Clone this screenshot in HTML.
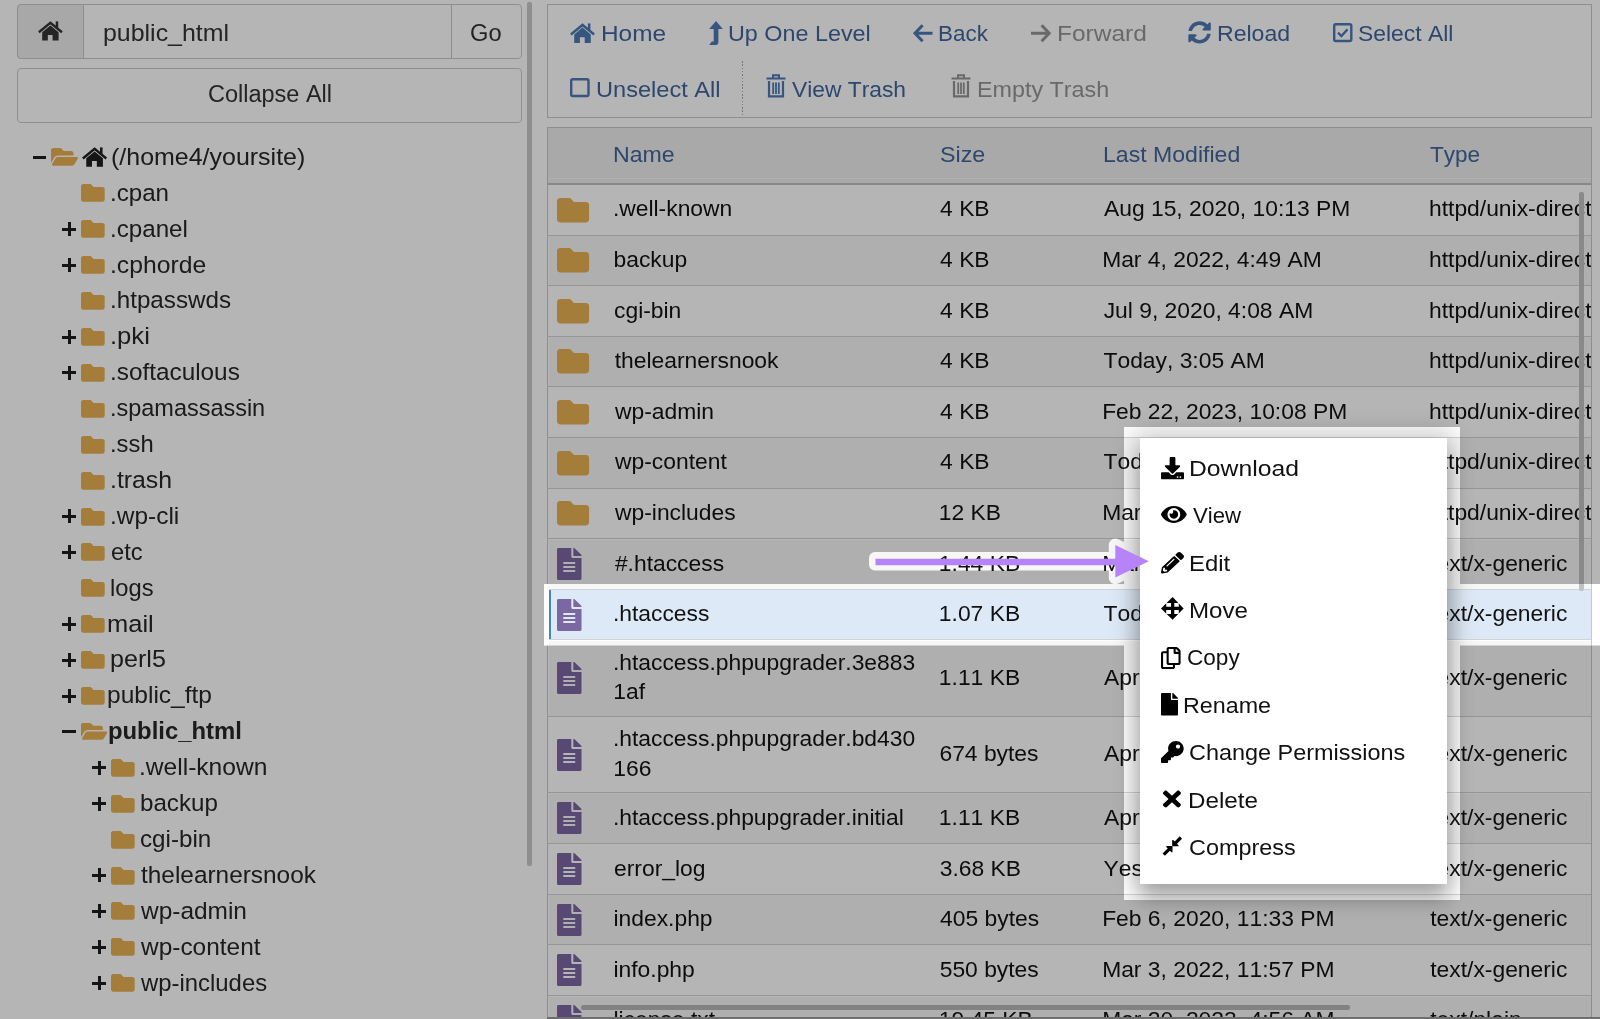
<!DOCTYPE html><html><head><meta charset="utf-8"><style>
html,body{margin:0;padding:0}
body{width:1600px;height:1019px;overflow:hidden;position:relative;background:#fff;font-family:"Liberation Sans",sans-serif}
.t{position:absolute;line-height:1;white-space:nowrap;font-kerning:none}
svg{overflow:visible}
</style></head><body><div id="root" style="position:absolute;left:0;top:0;width:1600px;height:1019px;will-change:transform">
<div style="position:absolute;left:17px;top:4px;width:505px;height:55px;box-sizing:border-box;border:1.5px solid #c9c9c9;border-radius:4px;background:#fff"></div>
<div style="position:absolute;left:17px;top:4px;width:67px;height:55px;box-sizing:border-box;border:1.5px solid #c9c9c9;border-radius:4px 0 0 4px;background:#ededed"></div>
<div style="position:absolute;left:450.5px;top:4px;width:1.5px;height:55px;background:#c9c9c9"></div>
<svg style="position:absolute;left:38px;top:21px;width:24.799999999999997px;height:19.5px;color:#333;" viewBox="0 0 26 20" preserveAspectRatio="none" fill="#333"><path d="M0.9 11.6 L13 1.9 L25.1 11.6" fill="none" stroke="currentColor" stroke-width="2.5" stroke-linejoin="miter"/><rect x="18.6" y="0.4" width="2.6" height="6.6"/><path d="M4.4 11.5 L13 4.6 L21.6 11.5 V20 H15.3 V14.3 H10.3 V20 H4.4 Z"/></svg>
<div class="t" style="top:21.13px;font-size:24.3px;color:#333;left:102.79px;transform:scaleX(1.0257);transform-origin:0 0;">public_html</div>
<div class="t" style="top:21.53px;font-size:23px;color:#333;left:469.81px;transform:scaleX(1.0294);transform-origin:0 0;">Go</div>
<div style="position:absolute;left:17px;top:68px;width:505px;height:55px;box-sizing:border-box;border:1.5px solid #c9c9c9;border-radius:4px;background:#fff"></div>
<div class="t" style="top:82.88px;font-size:23.3px;color:#333;left:207.61px;transform:scaleX(1.0084);transform-origin:0 0;">Collapse All</div>
<div style="position:absolute;left:527.4px;top:2.3px;width:4.399999999999977px;height:863.3000000000001px;background:#c8c8c8;border-radius:2px"></div>
<div style="position:absolute;left:32.8px;top:155.6px;width:13.5px;height:3.0px;background:#1e1e1e"></div>
<svg style="position:absolute;left:51px;top:147.79999999999998px;width:27px;height:17.80000000000001px;color:#e8b052;" viewBox="0 64 576 384" preserveAspectRatio="none" fill="#e8b052"><path d="M572.694 292.093L500.27 416.248A63.997 63.997 0 0 1 444.989 448H45.025c-18.523 0-30.064-20.093-20.731-36.093l72.424-124.155A64 64 0 0 1 152 256h399.964c18.523 0 30.064 20.093 20.73 36.093zM152 224h328v-48c0-26.51-21.49-48-48-48H272l-64-64H48C21.49 64 0 85.49 0 112v278.046l69.077-118.418C86.214 242.25 117.989 224 152 224z"/></svg>
<svg style="position:absolute;left:82px;top:146.9px;width:25.200000000000003px;height:19.69999999999999px;color:#1e1e1e;" viewBox="0 0 26 20" preserveAspectRatio="none" fill="#1e1e1e"><path d="M0.9 11.6 L13 1.9 L25.1 11.6" fill="none" stroke="currentColor" stroke-width="2.5" stroke-linejoin="miter"/><rect x="18.6" y="0.4" width="2.6" height="6.6"/><path d="M4.4 11.5 L13 4.6 L21.6 11.5 V20 H15.3 V14.3 H10.3 V20 H4.4 Z"/></svg>
<div class="t" style="top:144.86px;font-size:24.5px;color:#262626;left:111.25px;transform:scaleX(1.0192);transform-origin:0 0;">(/home4/yoursite)</div>
<svg style="position:absolute;left:81.1px;top:184.4px;width:23.700000000000003px;height:17.69999999999999px;color:#e8b052;" viewBox="0 64 512 384" preserveAspectRatio="none" fill="#e8b052"><path d="M464 128H272l-64-64H48C21.5 64 0 85.5 0 112v288c0 26.5 21.5 48 48 48h416c26.5 0 48-21.5 48-48V176c0-26.5-21.5-48-48-48z"/></svg>
<div class="t" style="top:180.76px;font-size:24.5px;color:#262626;left:109.70px;transform:scaleX(0.9839);transform-origin:0 0;">.cpan</div>
<div style="position:absolute;left:61.8px;top:227.79999999999998px;width:14.400000000000006px;height:3.0px;background:#1e1e1e"></div>
<div style="position:absolute;left:67.5px;top:222.2px;width:3.0px;height:14.0px;background:#1e1e1e"></div>
<svg style="position:absolute;left:81.1px;top:220.29999999999998px;width:23.700000000000003px;height:17.69999999999999px;color:#e8b052;" viewBox="0 64 512 384" preserveAspectRatio="none" fill="#e8b052"><path d="M464 128H272l-64-64H48C21.5 64 0 85.5 0 112v288c0 26.5 21.5 48 48 48h416c26.5 0 48-21.5 48-48V176c0-26.5-21.5-48-48-48z"/></svg>
<div class="t" style="top:216.66px;font-size:24.5px;color:#262626;left:109.69px;transform:scaleX(0.9863);transform-origin:0 0;">.cpanel</div>
<div style="position:absolute;left:61.8px;top:263.69999999999993px;width:14.400000000000006px;height:3.0px;background:#1e1e1e"></div>
<div style="position:absolute;left:67.5px;top:258.09999999999997px;width:3.0px;height:14.0px;background:#1e1e1e"></div>
<svg style="position:absolute;left:81.1px;top:256.19999999999993px;width:23.700000000000003px;height:17.700000000000045px;color:#e8b052;" viewBox="0 64 512 384" preserveAspectRatio="none" fill="#e8b052"><path d="M464 128H272l-64-64H48C21.5 64 0 85.5 0 112v288c0 26.5 21.5 48 48 48h416c26.5 0 48-21.5 48-48V176c0-26.5-21.5-48-48-48z"/></svg>
<div class="t" style="top:252.56px;font-size:24.5px;color:#262626;left:109.64px;transform:scaleX(1.0085);transform-origin:0 0;">.cphorde</div>
<svg style="position:absolute;left:81.1px;top:292.09999999999997px;width:23.700000000000003px;height:17.700000000000045px;color:#e8b052;" viewBox="0 64 512 384" preserveAspectRatio="none" fill="#e8b052"><path d="M464 128H272l-64-64H48C21.5 64 0 85.5 0 112v288c0 26.5 21.5 48 48 48h416c26.5 0 48-21.5 48-48V176c0-26.5-21.5-48-48-48z"/></svg>
<div class="t" style="top:288.46px;font-size:24.5px;color:#262626;left:109.69px;transform:scaleX(0.9871);transform-origin:0 0;">.htpasswds</div>
<div style="position:absolute;left:61.8px;top:335.5px;width:14.400000000000006px;height:3.0px;background:#1e1e1e"></div>
<div style="position:absolute;left:67.5px;top:329.90000000000003px;width:3.0px;height:14.0px;background:#1e1e1e"></div>
<svg style="position:absolute;left:81.1px;top:328.0px;width:23.700000000000003px;height:17.700000000000045px;color:#e8b052;" viewBox="0 64 512 384" preserveAspectRatio="none" fill="#e8b052"><path d="M464 128H272l-64-64H48C21.5 64 0 85.5 0 112v288c0 26.5 21.5 48 48 48h416c26.5 0 48-21.5 48-48V176c0-26.5-21.5-48-48-48z"/></svg>
<div class="t" style="top:324.36px;font-size:24.5px;color:#262626;left:109.56px;transform:scaleX(1.0456);transform-origin:0 0;">.pki</div>
<div style="position:absolute;left:61.8px;top:371.4px;width:14.400000000000006px;height:3.0px;background:#1e1e1e"></div>
<div style="position:absolute;left:67.5px;top:365.8px;width:3.0px;height:14.0px;background:#1e1e1e"></div>
<svg style="position:absolute;left:81.1px;top:363.9px;width:23.700000000000003px;height:17.700000000000045px;color:#e8b052;" viewBox="0 64 512 384" preserveAspectRatio="none" fill="#e8b052"><path d="M464 128H272l-64-64H48C21.5 64 0 85.5 0 112v288c0 26.5 21.5 48 48 48h416c26.5 0 48-21.5 48-48V176c0-26.5-21.5-48-48-48z"/></svg>
<div class="t" style="top:360.26px;font-size:24.5px;color:#262626;left:109.68px;transform:scaleX(0.9928);transform-origin:0 0;">.softaculous</div>
<svg style="position:absolute;left:81.1px;top:399.79999999999995px;width:23.700000000000003px;height:17.700000000000045px;color:#e8b052;" viewBox="0 64 512 384" preserveAspectRatio="none" fill="#e8b052"><path d="M464 128H272l-64-64H48C21.5 64 0 85.5 0 112v288c0 26.5 21.5 48 48 48h416c26.5 0 48-21.5 48-48V176c0-26.5-21.5-48-48-48z"/></svg>
<div class="t" style="top:396.16px;font-size:24.5px;color:#262626;left:109.76px;transform:scaleX(0.9576);transform-origin:0 0;">.spamassassin</div>
<svg style="position:absolute;left:81.1px;top:435.69999999999993px;width:23.700000000000003px;height:17.700000000000045px;color:#e8b052;" viewBox="0 64 512 384" preserveAspectRatio="none" fill="#e8b052"><path d="M464 128H272l-64-64H48C21.5 64 0 85.5 0 112v288c0 26.5 21.5 48 48 48h416c26.5 0 48-21.5 48-48V176c0-26.5-21.5-48-48-48z"/></svg>
<div class="t" style="top:432.06px;font-size:24.5px;color:#262626;left:109.73px;transform:scaleX(0.9707);transform-origin:0 0;">.ssh</div>
<svg style="position:absolute;left:81.1px;top:471.5999999999999px;width:23.700000000000003px;height:17.700000000000045px;color:#e8b052;" viewBox="0 64 512 384" preserveAspectRatio="none" fill="#e8b052"><path d="M464 128H272l-64-64H48C21.5 64 0 85.5 0 112v288c0 26.5 21.5 48 48 48h416c26.5 0 48-21.5 48-48V176c0-26.5-21.5-48-48-48z"/></svg>
<div class="t" style="top:467.96px;font-size:24.5px;color:#262626;left:109.63px;transform:scaleX(1.0131);transform-origin:0 0;">.trash</div>
<div style="position:absolute;left:61.8px;top:515.0px;width:14.400000000000006px;height:3.0px;background:#1e1e1e"></div>
<div style="position:absolute;left:67.5px;top:509.40000000000003px;width:3.0px;height:13.999999999999943px;background:#1e1e1e"></div>
<svg style="position:absolute;left:81.1px;top:507.5px;width:23.700000000000003px;height:17.700000000000045px;color:#e8b052;" viewBox="0 64 512 384" preserveAspectRatio="none" fill="#e8b052"><path d="M464 128H272l-64-64H48C21.5 64 0 85.5 0 112v288c0 26.5 21.5 48 48 48h416c26.5 0 48-21.5 48-48V176c0-26.5-21.5-48-48-48z"/></svg>
<div class="t" style="top:503.86px;font-size:24.5px;color:#262626;left:109.77px;transform:scaleX(0.9980);transform-origin:0 0;">.wp-cli</div>
<div style="position:absolute;left:61.8px;top:550.9px;width:14.400000000000006px;height:3.0px;background:#1e1e1e"></div>
<div style="position:absolute;left:67.5px;top:545.3px;width:3.0px;height:14.0px;background:#1e1e1e"></div>
<svg style="position:absolute;left:81.1px;top:543.4px;width:23.700000000000003px;height:17.700000000000045px;color:#e8b052;" viewBox="0 64 512 384" preserveAspectRatio="none" fill="#e8b052"><path d="M464 128H272l-64-64H48C21.5 64 0 85.5 0 112v288c0 26.5 21.5 48 48 48h416c26.5 0 48-21.5 48-48V176c0-26.5-21.5-48-48-48z"/></svg>
<div class="t" style="top:539.76px;font-size:24.5px;color:#262626;left:110.99px;transform:scaleX(0.9679);transform-origin:0 0;">etc</div>
<svg style="position:absolute;left:81.1px;top:579.3px;width:23.700000000000003px;height:17.700000000000045px;color:#e8b052;" viewBox="0 64 512 384" preserveAspectRatio="none" fill="#e8b052"><path d="M464 128H272l-64-64H48C21.5 64 0 85.5 0 112v288c0 26.5 21.5 48 48 48h416c26.5 0 48-21.5 48-48V176c0-26.5-21.5-48-48-48z"/></svg>
<div class="t" style="top:575.66px;font-size:24.5px;color:#262626;left:110.40px;transform:scaleX(0.9691);transform-origin:0 0;">logs</div>
<div style="position:absolute;left:61.8px;top:622.6999999999999px;width:14.400000000000006px;height:3.0px;background:#1e1e1e"></div>
<div style="position:absolute;left:67.5px;top:617.0999999999999px;width:3.0px;height:14.0px;background:#1e1e1e"></div>
<svg style="position:absolute;left:81.1px;top:615.1999999999999px;width:23.700000000000003px;height:17.700000000000045px;color:#e8b052;" viewBox="0 64 512 384" preserveAspectRatio="none" fill="#e8b052"><path d="M464 128H272l-64-64H48C21.5 64 0 85.5 0 112v288c0 26.5 21.5 48 48 48h416c26.5 0 48-21.5 48-48V176c0-26.5-21.5-48-48-48z"/></svg>
<div class="t" style="top:611.56px;font-size:24.5px;color:#262626;left:107.11px;transform:scaleX(1.0395);transform-origin:0 0;">mail</div>
<div style="position:absolute;left:61.8px;top:658.5999999999999px;width:14.400000000000006px;height:3.0px;background:#1e1e1e"></div>
<div style="position:absolute;left:67.5px;top:652.9999999999999px;width:3.0px;height:14.0px;background:#1e1e1e"></div>
<svg style="position:absolute;left:81.1px;top:651.0999999999999px;width:23.700000000000003px;height:17.700000000000045px;color:#e8b052;" viewBox="0 64 512 384" preserveAspectRatio="none" fill="#e8b052"><path d="M464 128H272l-64-64H48C21.5 64 0 85.5 0 112v288c0 26.5 21.5 48 48 48h416c26.5 0 48-21.5 48-48V176c0-26.5-21.5-48-48-48z"/></svg>
<div class="t" style="top:647.46px;font-size:24.5px;color:#262626;left:110.38px;transform:scaleX(1.0256);transform-origin:0 0;">perl5</div>
<div style="position:absolute;left:61.8px;top:694.5px;width:14.400000000000006px;height:3.0px;background:#1e1e1e"></div>
<div style="position:absolute;left:67.5px;top:688.9px;width:3.0px;height:14.0px;background:#1e1e1e"></div>
<svg style="position:absolute;left:81.1px;top:687.0px;width:23.700000000000003px;height:17.700000000000045px;color:#e8b052;" viewBox="0 64 512 384" preserveAspectRatio="none" fill="#e8b052"><path d="M464 128H272l-64-64H48C21.5 64 0 85.5 0 112v288c0 26.5 21.5 48 48 48h416c26.5 0 48-21.5 48-48V176c0-26.5-21.5-48-48-48z"/></svg>
<div class="t" style="top:683.36px;font-size:24.5px;color:#262626;left:107.22px;transform:scaleX(1.0013);transform-origin:0 0;">public_ftp</div>
<div style="position:absolute;left:62px;top:729.5px;width:13.5px;height:3.0px;background:#1e1e1e"></div>
<svg style="position:absolute;left:80.75px;top:723.2px;width:26.25px;height:16.799999999999955px;color:#e8b052;" viewBox="0 64 576 384" preserveAspectRatio="none" fill="#e8b052"><path d="M572.694 292.093L500.27 416.248A63.997 63.997 0 0 1 444.989 448H45.025c-18.523 0-30.064-20.093-20.731-36.093l72.424-124.155A64 64 0 0 1 152 256h399.964c18.523 0 30.064 20.093 20.73 36.093zM152 224h328v-48c0-26.51-21.49-48-48-48H272l-64-64H48C21.49 64 0 85.49 0 112v278.046l69.077-118.418C86.214 242.25 117.989 224 152 224z"/></svg>
<div class="t" style="top:720.11px;font-size:23.5px;color:#262626;font-weight:bold;left:107.68px;transform:scaleX(1.0144);transform-origin:0 0;">public_html</div>
<div style="position:absolute;left:91.8px;top:766.3px;width:14.400000000000006px;height:3.0px;background:#1e1e1e"></div>
<div style="position:absolute;left:97.5px;top:760.6999999999999px;width:3.0px;height:14.0px;background:#1e1e1e"></div>
<svg style="position:absolute;left:111.1px;top:758.8px;width:23.700000000000017px;height:17.700000000000045px;color:#e8b052;" viewBox="0 64 512 384" preserveAspectRatio="none" fill="#e8b052"><path d="M464 128H272l-64-64H48C21.5 64 0 85.5 0 112v288c0 26.5 21.5 48 48 48h416c26.5 0 48-21.5 48-48V176c0-26.5-21.5-48-48-48z"/></svg>
<div class="t" style="top:755.16px;font-size:24.5px;color:#262626;left:139.26px;transform:scaleX(1.0027);transform-origin:0 0;">.well-known</div>
<div style="position:absolute;left:91.8px;top:802.1999999999999px;width:14.400000000000006px;height:3.0px;background:#1e1e1e"></div>
<div style="position:absolute;left:97.5px;top:796.5999999999999px;width:3.0px;height:14.0px;background:#1e1e1e"></div>
<svg style="position:absolute;left:111.1px;top:794.6999999999999px;width:23.700000000000017px;height:17.700000000000045px;color:#e8b052;" viewBox="0 64 512 384" preserveAspectRatio="none" fill="#e8b052"><path d="M464 128H272l-64-64H48C21.5 64 0 85.5 0 112v288c0 26.5 21.5 48 48 48h416c26.5 0 48-21.5 48-48V176c0-26.5-21.5-48-48-48z"/></svg>
<div class="t" style="top:791.06px;font-size:24.5px;color:#262626;left:139.94px;transform:scaleX(0.9857);transform-origin:0 0;">backup</div>
<svg style="position:absolute;left:111.1px;top:830.6px;width:23.700000000000017px;height:17.700000000000045px;color:#e8b052;" viewBox="0 64 512 384" preserveAspectRatio="none" fill="#e8b052"><path d="M464 128H272l-64-64H48C21.5 64 0 85.5 0 112v288c0 26.5 21.5 48 48 48h416c26.5 0 48-21.5 48-48V176c0-26.5-21.5-48-48-48z"/></svg>
<div class="t" style="top:826.96px;font-size:24.5px;color:#262626;left:140.27px;transform:scaleX(0.9865);transform-origin:0 0;">cgi-bin</div>
<div style="position:absolute;left:91.8px;top:874.0px;width:14.400000000000006px;height:3.0px;background:#1e1e1e"></div>
<div style="position:absolute;left:97.5px;top:868.4px;width:3.0px;height:14.0px;background:#1e1e1e"></div>
<svg style="position:absolute;left:111.1px;top:866.5px;width:23.700000000000017px;height:17.700000000000045px;color:#e8b052;" viewBox="0 64 512 384" preserveAspectRatio="none" fill="#e8b052"><path d="M464 128H272l-64-64H48C21.5 64 0 85.5 0 112v288c0 26.5 21.5 48 48 48h416c26.5 0 48-21.5 48-48V176c0-26.5-21.5-48-48-48z"/></svg>
<div class="t" style="top:862.86px;font-size:24.5px;color:#262626;left:140.93px;transform:scaleX(0.9956);transform-origin:0 0;">thelearnersnook</div>
<div style="position:absolute;left:91.8px;top:909.9px;width:14.400000000000006px;height:3.0px;background:#1e1e1e"></div>
<div style="position:absolute;left:97.5px;top:904.3px;width:3.0px;height:14.0px;background:#1e1e1e"></div>
<svg style="position:absolute;left:111.1px;top:902.4px;width:23.700000000000017px;height:17.700000000000045px;color:#e8b052;" viewBox="0 64 512 384" preserveAspectRatio="none" fill="#e8b052"><path d="M464 128H272l-64-64H48C21.5 64 0 85.5 0 112v288c0 26.5 21.5 48 48 48h416c26.5 0 48-21.5 48-48V176c0-26.5-21.5-48-48-48z"/></svg>
<div class="t" style="top:898.76px;font-size:24.5px;color:#262626;left:141.34px;transform:scaleX(0.9976);transform-origin:0 0;">wp-admin</div>
<div style="position:absolute;left:91.8px;top:945.8px;width:14.400000000000006px;height:3.0px;background:#1e1e1e"></div>
<div style="position:absolute;left:97.5px;top:940.1999999999999px;width:3.0px;height:14.0px;background:#1e1e1e"></div>
<svg style="position:absolute;left:111.1px;top:938.3px;width:23.700000000000017px;height:17.700000000000045px;color:#e8b052;" viewBox="0 64 512 384" preserveAspectRatio="none" fill="#e8b052"><path d="M464 128H272l-64-64H48C21.5 64 0 85.5 0 112v288c0 26.5 21.5 48 48 48h416c26.5 0 48-21.5 48-48V176c0-26.5-21.5-48-48-48z"/></svg>
<div class="t" style="top:934.66px;font-size:24.5px;color:#262626;left:141.34px;transform:scaleX(0.9975);transform-origin:0 0;">wp-content</div>
<div style="position:absolute;left:91.8px;top:981.6999999999999px;width:14.400000000000006px;height:3.0px;background:#1e1e1e"></div>
<div style="position:absolute;left:97.5px;top:976.0999999999999px;width:3.0px;height:14.0px;background:#1e1e1e"></div>
<svg style="position:absolute;left:111.1px;top:974.1999999999999px;width:23.700000000000017px;height:17.700000000000045px;color:#e8b052;" viewBox="0 64 512 384" preserveAspectRatio="none" fill="#e8b052"><path d="M464 128H272l-64-64H48C21.5 64 0 85.5 0 112v288c0 26.5 21.5 48 48 48h416c26.5 0 48-21.5 48-48V176c0-26.5-21.5-48-48-48z"/></svg>
<div class="t" style="top:970.56px;font-size:24.5px;color:#262626;left:141.33px;transform:scaleX(0.9750);transform-origin:0 0;">wp-includes</div>
<div style="position:absolute;left:547px;top:4px;width:1045px;height:114px;box-sizing:border-box;border:1.5px solid #c9c9c9;background:#fff"></div>
<svg style="position:absolute;left:570px;top:22.7px;width:25px;height:20.000000000000004px;color:#4c79b4;" viewBox="0 0 26 20" preserveAspectRatio="none" fill="#4c79b4"><path d="M0.9 11.6 L13 1.9 L25.1 11.6" fill="none" stroke="currentColor" stroke-width="2.5" stroke-linejoin="miter"/><rect x="18.6" y="0.4" width="2.6" height="6.6"/><path d="M4.4 11.5 L13 4.6 L21.6 11.5 V20 H15.3 V14.3 H10.3 V20 H4.4 Z"/></svg>
<div class="t" style="top:22.77px;font-size:22.6px;color:#41659b;left:601.00px;transform:scaleX(1.0796);transform-origin:0 0;">Home</div>
<svg style="position:absolute;left:708.6px;top:20.5px;width:14px;height:24.5px" viewBox="0 0 14 24.5" fill="#4c79b4"><path d="M7 0 L13.8 8 H9.4 V21 Q9.4 24 6.6 24 H0.2 L2.8 20.6 H4.7 V8 H0.2 Z"/></svg>
<div class="t" style="top:22.77px;font-size:22.6px;color:#41659b;left:728.40px;transform:scaleX(1.0331);transform-origin:0 0;">Up One Level</div>
<svg style="position:absolute;left:912.8px;top:23.5px;width:19.5px;height:18.5px" viewBox="0 0 19.5 18.5"><path d="M9.6 1.3 L2 9.25 L9.6 17.2 M2.4 9.25 H19.5" fill="none" stroke="#4c79b4" stroke-width="3"/></svg>
<div class="t" style="top:22.77px;font-size:22.6px;color:#41659b;left:938.16px;transform:scaleX(0.9933);transform-origin:0 0;">Back</div>
<svg style="position:absolute;left:1031.2px;top:23.5px;width:20.2px;height:18.5px" viewBox="0 0 20.2 18.5"><path d="M10.6 1.3 L18.2 9.25 L10.6 17.2 M0 9.25 H17.8" fill="none" stroke="#959595" stroke-width="3"/></svg>
<div class="t" style="top:22.77px;font-size:22.6px;color:#959595;left:1056.79px;transform:scaleX(1.0833);transform-origin:0 0;">Forward</div>
<svg style="position:absolute;left:1187.8px;top:21.3px;width:23.200000000000045px;height:22.8px;color:#4c79b4;" viewBox="0 0 512 512" preserveAspectRatio="none" fill="#4c79b4"><path d="M370.72 133.28C339.458 104.008 298.888 87.962 255.848 88c-77.458.068-144.328 53.178-162.791 126.85-1.344 5.363-6.122 9.15-11.651 9.15H24.103c-7.498 0-13.194-6.807-11.807-14.176C33.933 94.924 134.813 8 256 8c66.448 0 126.791 26.136 171.315 68.685L463.03 40.97C478.149 25.851 504 36.559 504 57.941V192c0 13.255-10.745 24-24 24H345.941c-21.382 0-32.090-25.851-16.971-40.971l41.75-41.749zM32 296h134.059c21.382 0 32.090 25.851 16.971 40.971l-41.75 41.75c31.262 29.273 71.835 45.319 114.876 45.280 77.418-.07 144.315-53.144 162.787-126.849 1.344-5.363 6.122-9.15 11.651-9.15h57.304c7.498 0 13.194 6.807 11.807 14.176C478.067 417.076 377.187 504 256 504c-66.448 0-126.791-26.136-171.315-68.685L48.97 471.030C33.851 486.149 8 475.441 8 454.059V320c0-13.255 10.745-24 24-24z"/></svg>
<div class="t" style="top:22.77px;font-size:22.6px;color:#41659b;left:1216.86px;transform:scaleX(1.0211);transform-origin:0 0;">Reload</div>
<svg style="position:absolute;left:1332.8px;top:23.1px;width:19.5px;height:19.2px" viewBox="0 0 19.5 19.2"><rect x="1.2" y="1.2" width="17.1" height="16.8" rx="1.5" fill="none" stroke="#4c79b4" stroke-width="2.4"/><path d="M5 9.6 L8.4 13 L14.5 6.4" fill="none" stroke="#4c79b4" stroke-width="2.3"/></svg>
<div class="t" style="top:22.77px;font-size:22.6px;color:#41659b;left:1358.36px;transform:scaleX(1.0123);transform-origin:0 0;">Select All</div>
<svg style="position:absolute;left:570px;top:78.4px;width:19.7px;height:19.2px" viewBox="0 0 19.7 19.2"><rect x="1.2" y="1.2" width="17.3" height="16.8" rx="1.5" fill="none" stroke="#4c79b4" stroke-width="2.4"/></svg>
<div class="t" style="top:78.67px;font-size:22.6px;color:#41659b;left:595.58px;transform:scaleX(1.0442);transform-origin:0 0;">Unselect All</div>
<div style="position:absolute;left:741.5px;top:61px;width:1.5px;height:56px;background:repeating-linear-gradient(to bottom,#a9a9a9 0 1.5px,transparent 1.5px 3.3px)"></div>
<svg style="position:absolute;left:766.2px;top:73.7px;width:20px;height:24px" viewBox="0 0 20 24"><path d="M0.5 4.6 H19.5 M7 4.6 V1.2 H13 V4.6" fill="none" stroke="#4c79b4" stroke-width="2"/><path d="M3 7 V22.3 H17 V7" fill="none" stroke="#4c79b4" stroke-width="2.2"/><path d="M7.2 8.5 V20 M10 8.5 V20 M12.8 8.5 V20" stroke="#4c79b4" stroke-width="1.8"/></svg>
<div class="t" style="top:78.67px;font-size:22.6px;color:#41659b;left:792.40px;transform:scaleX(1.0093);transform-origin:0 0;">View Trash</div>
<svg style="position:absolute;left:951.2px;top:73.7px;width:20px;height:24px" viewBox="0 0 20 24"><path d="M0.5 4.6 H19.5 M7 4.6 V1.2 H13 V4.6" fill="none" stroke="#959595" stroke-width="2"/><path d="M3 7 V22.3 H17 V7" fill="none" stroke="#959595" stroke-width="2.2"/><path d="M7.2 8.5 V20 M10 8.5 V20 M12.8 8.5 V20" stroke="#959595" stroke-width="1.8"/></svg>
<div class="t" style="top:78.67px;font-size:22.6px;color:#959595;left:976.84px;transform:scaleX(1.0319);transform-origin:0 0;">Empty Trash</div>
<div style="position:absolute;left:547px;top:127px;width:1045px;height:913px;box-sizing:border-box;border:1.5px solid #c9c9c9;background:#fff"></div>
<div style="position:absolute;left:547px;top:127px;width:1045px;height:57.400000000000006px;box-sizing:border-box;border:1.5px solid #c9c9c9;border-bottom:none;background:#eeeeee"></div>
<div style="position:absolute;left:548.5px;top:178px;width:1042.0px;height:1px;background:#f8f8f8"></div>
<div style="position:absolute;left:547px;top:183.4px;width:1045px;height:1.799999999999983px;background:#c0c0c0"></div>
<div class="t" style="top:144.05px;font-size:22.5px;color:#41659b;left:613.10px;transform:scaleX(1.0276);transform-origin:0 0;">Name</div>
<div class="t" style="top:144.05px;font-size:22.5px;color:#41659b;left:940.19px;transform:scaleX(1.0336);transform-origin:0 0;">Size</div>
<div class="t" style="top:144.05px;font-size:22.5px;color:#41659b;left:1102.71px;transform:scaleX(1.0258);transform-origin:0 0;">Last Modified</div>
<div class="t" style="top:144.05px;font-size:22.5px;color:#41659b;left:1430.09px;">Type</div>
<div style="position:absolute;left:547px;top:0;width:1044px;height:1017px;overflow:hidden">
<div style="position:absolute;left:1.5px;top:185.4px;width:1042.0px;height:49.599999999999994px;background:#fff"></div>
<div style="position:absolute;left:0px;top:234.5px;width:1045px;height:1.0999999999999943px;background:#d3d3d3"></div>
<svg style="position:absolute;left:9.899999999999977px;top:197.5px;width:32.10000000000002px;height:24.399999999999977px;color:#e8b052;" viewBox="0 64 512 384" preserveAspectRatio="none" fill="#e8b052"><path d="M464 128H272l-64-64H48C21.5 64 0 85.5 0 112v288c0 26.5 21.5 48 48 48h416c26.5 0 48-21.5 48-48V176c0-26.5-21.5-48-48-48z"/></svg>
<div class="t" style="left:65.91px;top:197.36px;font-size:22.85px;color:#111">.well-known</div>
<div class="t" style="left:393.08px;top:197.36px;font-size:22.85px;color:#111">4 KB</div>
<div class="t" style="left:556.96px;top:197.36px;font-size:22.85px;color:#111">Aug 15, 2020, 10:13 PM</div>
<div class="t" style="left:882.02px;top:197.36px;font-size:22.85px;color:#111">httpd/unix-directory</div>
<div style="position:absolute;left:1.5px;top:236.0px;width:1042.0px;height:49.60000000000002px;background:#f7f7f7"></div>
<div style="position:absolute;left:0px;top:285.1px;width:1045px;height:1.1000000000000227px;background:#d3d3d3"></div>
<svg style="position:absolute;left:9.899999999999977px;top:248.10000000000002px;width:32.10000000000002px;height:24.399999999999977px;color:#e8b052;" viewBox="0 64 512 384" preserveAspectRatio="none" fill="#e8b052"><path d="M464 128H272l-64-64H48C21.5 64 0 85.5 0 112v288c0 26.5 21.5 48 48 48h416c26.5 0 48-21.5 48-48V176c0-26.5-21.5-48-48-48z"/></svg>
<div class="t" style="left:66.53px;top:247.96px;font-size:22.85px;color:#111">backup</div>
<div class="t" style="left:393.08px;top:247.96px;font-size:22.85px;color:#111">4 KB</div>
<div class="t" style="left:555.13px;top:247.96px;font-size:22.85px;color:#111">Mar 4, 2022, 4:49 AM</div>
<div class="t" style="left:882.02px;top:247.96px;font-size:22.85px;color:#111">httpd/unix-directory</div>
<div style="position:absolute;left:1.5px;top:286.6px;width:1042.0px;height:49.60000000000002px;background:#fff"></div>
<div style="position:absolute;left:0px;top:335.70000000000005px;width:1045px;height:1.1000000000000227px;background:#d3d3d3"></div>
<svg style="position:absolute;left:9.899999999999977px;top:298.70000000000005px;width:32.10000000000002px;height:24.399999999999977px;color:#e8b052;" viewBox="0 64 512 384" preserveAspectRatio="none" fill="#e8b052"><path d="M464 128H272l-64-64H48C21.5 64 0 85.5 0 112v288c0 26.5 21.5 48 48 48h416c26.5 0 48-21.5 48-48V176c0-26.5-21.5-48-48-48z"/></svg>
<div class="t" style="left:67.03px;top:298.56px;font-size:22.85px;color:#111">cgi-bin</div>
<div class="t" style="left:393.08px;top:298.56px;font-size:22.85px;color:#111">4 KB</div>
<div class="t" style="left:556.64px;top:298.56px;font-size:22.85px;color:#111">Jul 9, 2020, 4:08 AM</div>
<div class="t" style="left:882.02px;top:298.56px;font-size:22.85px;color:#111">httpd/unix-directory</div>
<div style="position:absolute;left:1.5px;top:337.20000000000005px;width:1042.0px;height:49.60000000000002px;background:#f7f7f7"></div>
<div style="position:absolute;left:0px;top:386.30000000000007px;width:1045px;height:1.1000000000000227px;background:#d3d3d3"></div>
<svg style="position:absolute;left:9.899999999999977px;top:349.30000000000007px;width:32.10000000000002px;height:24.399999999999977px;color:#e8b052;" viewBox="0 64 512 384" preserveAspectRatio="none" fill="#e8b052"><path d="M464 128H272l-64-64H48C21.5 64 0 85.5 0 112v288c0 26.5 21.5 48 48 48h416c26.5 0 48-21.5 48-48V176c0-26.5-21.5-48-48-48z"/></svg>
<div class="t" style="left:67.65px;top:349.16px;font-size:22.85px;color:#111">thelearnersnook</div>
<div class="t" style="left:393.08px;top:349.16px;font-size:22.85px;color:#111">4 KB</div>
<div class="t" style="left:556.49px;top:349.16px;font-size:22.85px;color:#111">Today, 3:05 AM</div>
<div class="t" style="left:882.02px;top:349.16px;font-size:22.85px;color:#111">httpd/unix-directory</div>
<div style="position:absolute;left:1.5px;top:387.80000000000007px;width:1042.0px;height:49.60000000000002px;background:#fff"></div>
<div style="position:absolute;left:0px;top:436.9000000000001px;width:1045px;height:1.1000000000000227px;background:#d3d3d3"></div>
<svg style="position:absolute;left:9.899999999999977px;top:399.9000000000001px;width:32.10000000000002px;height:24.399999999999977px;color:#e8b052;" viewBox="0 64 512 384" preserveAspectRatio="none" fill="#e8b052"><path d="M464 128H272l-64-64H48C21.5 64 0 85.5 0 112v288c0 26.5 21.5 48 48 48h416c26.5 0 48-21.5 48-48V176c0-26.5-21.5-48-48-48z"/></svg>
<div class="t" style="left:68.03px;top:399.76px;font-size:22.85px;color:#111">wp-admin</div>
<div class="t" style="left:393.08px;top:399.76px;font-size:22.85px;color:#111">4 KB</div>
<div class="t" style="left:555.13px;top:399.76px;font-size:22.85px;color:#111">Feb 22, 2023, 10:08 PM</div>
<div class="t" style="left:882.02px;top:399.76px;font-size:22.85px;color:#111">httpd/unix-directory</div>
<div style="position:absolute;left:1.5px;top:438.4000000000001px;width:1042.0px;height:49.60000000000002px;background:#f7f7f7"></div>
<div style="position:absolute;left:0px;top:487.5000000000001px;width:1045px;height:1.1000000000000227px;background:#d3d3d3"></div>
<svg style="position:absolute;left:9.899999999999977px;top:450.5000000000001px;width:32.10000000000002px;height:24.399999999999977px;color:#e8b052;" viewBox="0 64 512 384" preserveAspectRatio="none" fill="#e8b052"><path d="M464 128H272l-64-64H48C21.5 64 0 85.5 0 112v288c0 26.5 21.5 48 48 48h416c26.5 0 48-21.5 48-48V176c0-26.5-21.5-48-48-48z"/></svg>
<div class="t" style="left:68.03px;top:450.36px;font-size:22.85px;color:#111">wp-content</div>
<div class="t" style="left:393.08px;top:450.36px;font-size:22.85px;color:#111">4 KB</div>
<div class="t" style="left:556.49px;top:450.36px;font-size:22.85px;color:#111">Today, 2:58 AM</div>
<div class="t" style="left:882.02px;top:450.36px;font-size:22.85px;color:#111">httpd/unix-directory</div>
<div style="position:absolute;left:1.5px;top:489.0000000000001px;width:1042.0px;height:49.60000000000002px;background:#fff"></div>
<div style="position:absolute;left:0px;top:538.1000000000001px;width:1045px;height:1.1000000000000227px;background:#d3d3d3"></div>
<svg style="position:absolute;left:9.899999999999977px;top:501.1000000000002px;width:32.10000000000002px;height:24.400000000000034px;color:#e8b052;" viewBox="0 64 512 384" preserveAspectRatio="none" fill="#e8b052"><path d="M464 128H272l-64-64H48C21.5 64 0 85.5 0 112v288c0 26.5 21.5 48 48 48h416c26.5 0 48-21.5 48-48V176c0-26.5-21.5-48-48-48z"/></svg>
<div class="t" style="left:68.03px;top:500.96px;font-size:22.85px;color:#111">wp-includes</div>
<div class="t" style="left:391.86px;top:500.96px;font-size:22.85px;color:#111">12 KB</div>
<div class="t" style="left:555.13px;top:500.96px;font-size:22.85px;color:#111">Mar 29, 2023, 4:17 AM</div>
<div class="t" style="left:882.02px;top:500.96px;font-size:22.85px;color:#111">httpd/unix-directory</div>
<div style="position:absolute;left:1.5px;top:539.6000000000001px;width:1042.0px;height:49.60000000000002px;background:#f7f7f7"></div>
<div style="position:absolute;left:0px;top:588.7000000000002px;width:1045px;height:1.1000000000000227px;background:#d3d3d3"></div>
<svg style="position:absolute;left:9.5px;top:547.9000000000001px;width:24.5px;height:32.0px;color:#7b68a2;" viewBox="0 0 384 512" preserveAspectRatio="none" fill="#7b68a2"><path d="M224 136V0H24C10.7 0 0 10.7 0 24v464c0 13.3 10.7 24 24 24h336c13.3 0 24-10.7 24-24V160H248c-13.2 0-24-10.8-24-24zm64 236c0 6.6-5.4 12-12 12H108c-6.6 0-12-5.4-12-12v-8c0-6.6 5.4-12 12-12h168c6.6 0 12 5.4 12 12v8zm0-64c0 6.6-5.4 12-12 12H108c-6.6 0-12-5.4-12-12v-8c0-6.6 5.4-12 12-12h168c6.6 0 12 5.4 12 12v8zm0-72v8c0 6.6-5.4 12-12 12H108c-6.6 0-12-5.4-12-12v-8c0-6.6 5.4-12 12-12h168c6.6 0 12 5.4 12 12zm96-114.1v6.1H256V0h6.1c6.4 0 12.5 2.5 17 7l97.9 98c4.5 4.5 7 10.6 7 16.9z"/></svg>
<div class="t" style="left:67.90px;top:551.56px;font-size:22.85px;color:#111">#.htaccess</div>
<div class="t" style="left:391.86px;top:551.56px;font-size:22.85px;color:#111">1.44 KB</div>
<div class="t" style="left:555.13px;top:551.56px;font-size:22.85px;color:#111">Mar 4, 2022, 4:50 AM</div>
<div class="t" style="left:883.25px;top:551.56px;font-size:22.85px;color:#111">text/x-generic</div>
<div style="position:absolute;left:1.5px;top:590.2000000000002px;width:1042.0px;height:49.60000000000002px;background:#dde9f6"></div>
<div style="position:absolute;left:0px;top:639.3000000000002px;width:1045px;height:1.1000000000000227px;background:#d3d3d3"></div>
<div style="position:absolute;left:1.5px;top:590.2000000000002px;width:2.7999999999999545px;height:48.60000000000002px;background:#4a86ad"></div>
<svg style="position:absolute;left:9.5px;top:598.5000000000002px;width:24.5px;height:32.0px;color:#7b68a2;" viewBox="0 0 384 512" preserveAspectRatio="none" fill="#7b68a2"><path d="M224 136V0H24C10.7 0 0 10.7 0 24v464c0 13.3 10.7 24 24 24h336c13.3 0 24-10.7 24-24V160H248c-13.2 0-24-10.8-24-24zm64 236c0 6.6-5.4 12-12 12H108c-6.6 0-12-5.4-12-12v-8c0-6.6 5.4-12 12-12h168c6.6 0 12 5.4 12 12v8zm0-64c0 6.6-5.4 12-12 12H108c-6.6 0-12-5.4-12-12v-8c0-6.6 5.4-12 12-12h168c6.6 0 12 5.4 12 12v8zm0-72v8c0 6.6-5.4 12-12 12H108c-6.6 0-12-5.4-12-12v-8c0-6.6 5.4-12 12-12h168c6.6 0 12 5.4 12 12zm96-114.1v6.1H256V0h6.1c6.4 0 12.5 2.5 17 7l97.9 98c4.5 4.5 7 10.6 7 16.9z"/></svg>
<div class="t" style="left:65.91px;top:602.16px;font-size:22.85px;color:#111">.htaccess</div>
<div class="t" style="left:391.86px;top:602.16px;font-size:22.85px;color:#111">1.07 KB</div>
<div class="t" style="left:556.49px;top:602.16px;font-size:22.85px;color:#111">Today, 3:05 AM</div>
<div class="t" style="left:883.25px;top:602.16px;font-size:22.85px;color:#111">text/x-generic</div>
<div style="position:absolute;left:1.5px;top:640.8000000000002px;width:1042.0px;height:75.5px;background:#f7f7f7"></div>
<div style="position:absolute;left:0px;top:715.8000000000002px;width:1045px;height:1.1000000000000227px;background:#d3d3d3"></div>
<svg style="position:absolute;left:9.5px;top:662.0500000000002px;width:24.5px;height:32.0px;color:#7b68a2;" viewBox="0 0 384 512" preserveAspectRatio="none" fill="#7b68a2"><path d="M224 136V0H24C10.7 0 0 10.7 0 24v464c0 13.3 10.7 24 24 24h336c13.3 0 24-10.7 24-24V160H248c-13.2 0-24-10.8-24-24zm64 236c0 6.6-5.4 12-12 12H108c-6.6 0-12-5.4-12-12v-8c0-6.6 5.4-12 12-12h168c6.6 0 12 5.4 12 12v8zm0-64c0 6.6-5.4 12-12 12H108c-6.6 0-12-5.4-12-12v-8c0-6.6 5.4-12 12-12h168c6.6 0 12 5.4 12 12v8zm0-72v8c0 6.6-5.4 12-12 12H108c-6.6 0-12-5.4-12-12v-8c0-6.6 5.4-12 12-12h168c6.6 0 12 5.4 12 12zm96-114.1v6.1H256V0h6.1c6.4 0 12.5 2.5 17 7l97.9 98c4.5 4.5 7 10.6 7 16.9z"/></svg>
<div class="t" style="left:65.91px;top:650.96px;font-size:22.85px;color:#111">.htaccess.phpupgrader.3e883</div>
<div class="t" style="left:66.26px;top:680.06px;font-size:22.85px;color:#111">1af</div>
<div class="t" style="left:391.86px;top:665.71px;font-size:22.85px;color:#111">1.11 KB</div>
<div class="t" style="left:556.96px;top:665.71px;font-size:22.85px;color:#111">Apr 18, 2022, 9:13 PM</div>
<div class="t" style="left:883.25px;top:665.71px;font-size:22.85px;color:#111">text/x-generic</div>
<div style="position:absolute;left:1.5px;top:717.3000000000002px;width:1042.0px;height:75.60000000000002px;background:#fff"></div>
<div style="position:absolute;left:0px;top:792.4000000000002px;width:1045px;height:1.1000000000000227px;background:#d3d3d3"></div>
<svg style="position:absolute;left:9.5px;top:738.6000000000001px;width:24.5px;height:32.0px;color:#7b68a2;" viewBox="0 0 384 512" preserveAspectRatio="none" fill="#7b68a2"><path d="M224 136V0H24C10.7 0 0 10.7 0 24v464c0 13.3 10.7 24 24 24h336c13.3 0 24-10.7 24-24V160H248c-13.2 0-24-10.8-24-24zm64 236c0 6.6-5.4 12-12 12H108c-6.6 0-12-5.4-12-12v-8c0-6.6 5.4-12 12-12h168c6.6 0 12 5.4 12 12v8zm0-64c0 6.6-5.4 12-12 12H108c-6.6 0-12-5.4-12-12v-8c0-6.6 5.4-12 12-12h168c6.6 0 12 5.4 12 12v8zm0-72v8c0 6.6-5.4 12-12 12H108c-6.6 0-12-5.4-12-12v-8c0-6.6 5.4-12 12-12h168c6.6 0 12 5.4 12 12zm96-114.1v6.1H256V0h6.1c6.4 0 12.5 2.5 17 7l97.9 98c4.5 4.5 7 10.6 7 16.9z"/></svg>
<div class="t" style="left:65.91px;top:727.46px;font-size:22.85px;color:#111">.htaccess.phpupgrader.bd430</div>
<div class="t" style="left:66.26px;top:756.56px;font-size:22.85px;color:#111">166</div>
<div class="t" style="left:392.44px;top:742.26px;font-size:22.85px;color:#111">674 bytes</div>
<div class="t" style="left:556.96px;top:742.26px;font-size:22.85px;color:#111">Apr 18, 2022, 9:13 PM</div>
<div class="t" style="left:883.25px;top:742.26px;font-size:22.85px;color:#111">text/x-generic</div>
<div style="position:absolute;left:1.5px;top:793.9000000000002px;width:1042.0px;height:49.799999999999955px;background:#f7f7f7"></div>
<div style="position:absolute;left:0px;top:843.2000000000002px;width:1045px;height:1.1000000000000227px;background:#d3d3d3"></div>
<svg style="position:absolute;left:9.5px;top:802.3000000000002px;width:24.5px;height:32.0px;color:#7b68a2;" viewBox="0 0 384 512" preserveAspectRatio="none" fill="#7b68a2"><path d="M224 136V0H24C10.7 0 0 10.7 0 24v464c0 13.3 10.7 24 24 24h336c13.3 0 24-10.7 24-24V160H248c-13.2 0-24-10.8-24-24zm64 236c0 6.6-5.4 12-12 12H108c-6.6 0-12-5.4-12-12v-8c0-6.6 5.4-12 12-12h168c6.6 0 12 5.4 12 12v8zm0-64c0 6.6-5.4 12-12 12H108c-6.6 0-12-5.4-12-12v-8c0-6.6 5.4-12 12-12h168c6.6 0 12 5.4 12 12v8zm0-72v8c0 6.6-5.4 12-12 12H108c-6.6 0-12-5.4-12-12v-8c0-6.6 5.4-12 12-12h168c6.6 0 12 5.4 12 12zm96-114.1v6.1H256V0h6.1c6.4 0 12.5 2.5 17 7l97.9 98c4.5 4.5 7 10.6 7 16.9z"/></svg>
<div class="t" style="left:65.91px;top:805.96px;font-size:22.85px;color:#111">.htaccess.phpupgrader.initial</div>
<div class="t" style="left:391.86px;top:805.96px;font-size:22.85px;color:#111">1.11 KB</div>
<div class="t" style="left:556.96px;top:805.96px;font-size:22.85px;color:#111">Apr 18, 2022, 9:13 PM</div>
<div class="t" style="left:883.25px;top:805.96px;font-size:22.85px;color:#111">text/x-generic</div>
<div style="position:absolute;left:1.5px;top:844.7000000000002px;width:1042.0px;height:49.60000000000002px;background:#fff"></div>
<div style="position:absolute;left:0px;top:893.8000000000002px;width:1045px;height:1.1000000000000227px;background:#d3d3d3"></div>
<svg style="position:absolute;left:9.5px;top:853.0000000000002px;width:24.5px;height:32.0px;color:#7b68a2;" viewBox="0 0 384 512" preserveAspectRatio="none" fill="#7b68a2"><path d="M224 136V0H24C10.7 0 0 10.7 0 24v464c0 13.3 10.7 24 24 24h336c13.3 0 24-10.7 24-24V160H248c-13.2 0-24-10.8-24-24zm64 236c0 6.6-5.4 12-12 12H108c-6.6 0-12-5.4-12-12v-8c0-6.6 5.4-12 12-12h168c6.6 0 12 5.4 12 12v8zm0-64c0 6.6-5.4 12-12 12H108c-6.6 0-12-5.4-12-12v-8c0-6.6 5.4-12 12-12h168c6.6 0 12 5.4 12 12v8zm0-72v8c0 6.6-5.4 12-12 12H108c-6.6 0-12-5.4-12-12v-8c0-6.6 5.4-12 12-12h168c6.6 0 12 5.4 12 12zm96-114.1v6.1H256V0h6.1c6.4 0 12.5 2.5 17 7l97.9 98c4.5 4.5 7 10.6 7 16.9z"/></svg>
<div class="t" style="left:67.03px;top:856.66px;font-size:22.85px;color:#111">error_log</div>
<div class="t" style="left:392.73px;top:856.66px;font-size:22.85px;color:#111">3.68 KB</div>
<div class="t" style="left:556.50px;top:856.66px;font-size:22.85px;color:#111">Yesterday, 11:02 PM</div>
<div class="t" style="left:883.25px;top:856.66px;font-size:22.85px;color:#111">text/x-generic</div>
<div style="position:absolute;left:1.5px;top:895.3000000000002px;width:1042.0px;height:49.60000000000002px;background:#f7f7f7"></div>
<div style="position:absolute;left:0px;top:944.4000000000002px;width:1045px;height:1.1000000000000227px;background:#d3d3d3"></div>
<svg style="position:absolute;left:9.5px;top:903.6000000000001px;width:24.5px;height:32.0px;color:#7b68a2;" viewBox="0 0 384 512" preserveAspectRatio="none" fill="#7b68a2"><path d="M224 136V0H24C10.7 0 0 10.7 0 24v464c0 13.3 10.7 24 24 24h336c13.3 0 24-10.7 24-24V160H248c-13.2 0-24-10.8-24-24zm64 236c0 6.6-5.4 12-12 12H108c-6.6 0-12-5.4-12-12v-8c0-6.6 5.4-12 12-12h168c6.6 0 12 5.4 12 12v8zm0-64c0 6.6-5.4 12-12 12H108c-6.6 0-12-5.4-12-12v-8c0-6.6 5.4-12 12-12h168c6.6 0 12 5.4 12 12v8zm0-72v8c0 6.6-5.4 12-12 12H108c-6.6 0-12-5.4-12-12v-8c0-6.6 5.4-12 12-12h168c6.6 0 12 5.4 12 12zm96-114.1v6.1H256V0h6.1c6.4 0 12.5 2.5 17 7l97.9 98c4.5 4.5 7 10.6 7 16.9z"/></svg>
<div class="t" style="left:66.47px;top:907.26px;font-size:22.85px;color:#111">index.php</div>
<div class="t" style="left:393.08px;top:907.26px;font-size:22.85px;color:#111">405 bytes</div>
<div class="t" style="left:555.13px;top:907.26px;font-size:22.85px;color:#111">Feb 6, 2020, 11:33 PM</div>
<div class="t" style="left:883.25px;top:907.26px;font-size:22.85px;color:#111">text/x-generic</div>
<div style="position:absolute;left:1.5px;top:945.9000000000002px;width:1042.0px;height:49.60000000000002px;background:#fff"></div>
<div style="position:absolute;left:0px;top:995.0000000000002px;width:1045px;height:1.1000000000000227px;background:#d3d3d3"></div>
<svg style="position:absolute;left:9.5px;top:954.2000000000003px;width:24.5px;height:32.0px;color:#7b68a2;" viewBox="0 0 384 512" preserveAspectRatio="none" fill="#7b68a2"><path d="M224 136V0H24C10.7 0 0 10.7 0 24v464c0 13.3 10.7 24 24 24h336c13.3 0 24-10.7 24-24V160H248c-13.2 0-24-10.8-24-24zm64 236c0 6.6-5.4 12-12 12H108c-6.6 0-12-5.4-12-12v-8c0-6.6 5.4-12 12-12h168c6.6 0 12 5.4 12 12v8zm0-64c0 6.6-5.4 12-12 12H108c-6.6 0-12-5.4-12-12v-8c0-6.6 5.4-12 12-12h168c6.6 0 12 5.4 12 12v8zm0-72v8c0 6.6-5.4 12-12 12H108c-6.6 0-12-5.4-12-12v-8c0-6.6 5.4-12 12-12h168c6.6 0 12 5.4 12 12zm96-114.1v6.1H256V0h6.1c6.4 0 12.5 2.5 17 7l97.9 98c4.5 4.5 7 10.6 7 16.9z"/></svg>
<div class="t" style="left:66.47px;top:957.86px;font-size:22.85px;color:#111">info.php</div>
<div class="t" style="left:392.69px;top:957.86px;font-size:22.85px;color:#111">550 bytes</div>
<div class="t" style="left:555.13px;top:957.86px;font-size:22.85px;color:#111">Mar 3, 2022, 11:57 PM</div>
<div class="t" style="left:883.25px;top:957.86px;font-size:22.85px;color:#111">text/x-generic</div>
<div style="position:absolute;left:1.5px;top:996.5000000000002px;width:1042.0px;height:49.59999999999991px;background:#f7f7f7"></div>
<div style="position:absolute;left:0px;top:1045.6000000000001px;width:1045px;height:1.099999999999909px;background:#d3d3d3"></div>
<svg style="position:absolute;left:9.5px;top:1004.8000000000002px;width:24.5px;height:32.0px;color:#7b68a2;" viewBox="0 0 384 512" preserveAspectRatio="none" fill="#7b68a2"><path d="M224 136V0H24C10.7 0 0 10.7 0 24v464c0 13.3 10.7 24 24 24h336c13.3 0 24-10.7 24-24V160H248c-13.2 0-24-10.8-24-24zm64 236c0 6.6-5.4 12-12 12H108c-6.6 0-12-5.4-12-12v-8c0-6.6 5.4-12 12-12h168c6.6 0 12 5.4 12 12v8zm0-64c0 6.6-5.4 12-12 12H108c-6.6 0-12-5.4-12-12v-8c0-6.6 5.4-12 12-12h168c6.6 0 12 5.4 12 12v8zm0-72v8c0 6.6-5.4 12-12 12H108c-6.6 0-12-5.4-12-12v-8c0-6.6 5.4-12 12-12h168c6.6 0 12 5.4 12 12zm96-114.1v6.1H256V0h6.1c6.4 0 12.5 2.5 17 7l97.9 98c4.5 4.5 7 10.6 7 16.9z"/></svg>
<div class="t" style="left:66.46px;top:1008.46px;font-size:22.85px;color:#111">license.txt</div>
<div class="t" style="left:391.86px;top:1008.46px;font-size:22.85px;color:#111">19.45 KB</div>
<div class="t" style="left:555.13px;top:1008.46px;font-size:22.85px;color:#111">Mar 20, 2023, 4:56 AM</div>
<div class="t" style="left:883.25px;top:1008.46px;font-size:22.85px;color:#111">text/plain</div>
</div>
<div style="position:absolute;left:1591px;top:127px;width:9px;height:892px;background:#fff"></div>
<div style="position:absolute;left:1590.5px;top:127px;width:1.5px;height:892px;background:#c9c9c9"></div>
<div style="position:absolute;left:1579.4px;top:192px;width:4.399999999999864px;height:399.4px;background:#c2c2c2;border-radius:2px"></div>
<div style="position:absolute;left:581px;top:1004.8px;width:769.4000000000001px;height:5.0px;background:#b7b7b7;border-radius:2px"></div>
<div style="position:absolute;left:547px;top:1017px;width:1053px;height:2px;background:#9b9b9b"></div>
<div style="position:absolute;left:544px;top:584px;width:4.5px;height:61.5px;background:#fff"></div>
<div style="position:absolute;left:1139.5px;top:437.5px;width:307.9000000000001px;height:446.0px;background:#fff;box-shadow:0 0 24px 6px rgba(0,0,0,.21),0 16px 20px rgba(0,0,0,.24)"></div>
<svg style="position:absolute;left:1160.6px;top:456.7px;width:23.0px;height:22.19999999999999px;color:#000;" viewBox="0 0 512 512" preserveAspectRatio="none" fill="#000"><path d="M216 0h80c13.3 0 24 10.7 24 24v168h87.7c17.8 0 26.7 21.5 14.1 34.1L269.7 378.3c-7.5 7.5-19.8 7.5-27.3 0L90.1 226.1c-12.6-12.6-3.7-34.1 14.1-34.1H192V24c0-13.3 10.7-24 24-24zm296 376v112c0 13.3-10.7 24-24 24H24c-13.3 0-24-10.7-24-24V376c0-13.3 10.7-24 24-24h146.7l49 49c20.1 20.1 52.5 20.1 72.6 0l49-49H488c13.3 0 24 10.7 24 24zm-124 88c0-11-9-20-20-20s-20 9-20 20 9 20 20 20 20-9 20-20zm64 0c0-11-9-20-20-20s-20 9-20 20 9 20 20 20 20-9 20-20z"/></svg>
<div class="t" style="top:457.98px;font-size:22px;color:#111;left:1188.57px;transform:scaleX(1.1245);transform-origin:0 0;">Download</div>
<svg style="position:absolute;left:1160.8px;top:506.3px;width:25.700000000000045px;height:16.900000000000034px;color:#000;" viewBox="0 64 576 384" preserveAspectRatio="none" fill="#000"><path d="M572.52 241.4C518.29 135.59 410.93 64 288 64S57.68 135.64 3.48 241.41a32.35 32.35 0 0 0 0 29.19C57.71 376.41 165.07 448 288 448s230.32-71.64 284.52-177.41a32.35 32.35 0 0 0 0-29.19zM288 400a144 144 0 1 1 144-144 143.93 143.93 0 0 1-144 144zm0-240a95.31 95.31 0 0 0-25.31 3.790 47.85 47.85 0 0 1-66.9 66.9A95.78 95.78 0 1 0 288 160z"/></svg>
<div class="t" style="top:505.35px;font-size:22px;color:#111;left:1192.90px;transform:scaleX(1.0075);transform-origin:0 0;">View</div>
<svg style="position:absolute;left:1160.6px;top:552px;width:23.0px;height:21.5px;color:#000;" viewBox="0 0 512 512" preserveAspectRatio="none" fill="#000"><path d="M497.9 142.1l-46.1 46.1c-4.7 4.7-12.3 4.7-17 0l-111-111c-4.7-4.7-4.7-12.3 0-17l46.1-46.1c18.7-18.7 49.1-18.7 67.9 0l60.1 60.1c18.8 18.7 18.8 49.1 0 67.9zM284.2 99.8L21.6 362.4.4 483.9c-2.9 16.4 11.4 30.6 27.8 27.8l121.5-21.3 262.6-262.6c4.7-4.7 4.7-12.3 0-17l-111-111c-4.8-4.7-12.4-4.7-17.1 0zM124.1 339.9c-5.5-5.5-5.5-14.3 0-19.8l154-154c5.5-5.5 14.3-5.5 19.8 0s5.5 14.3 0 19.8l-154 154c-5.5 5.5-14.3 5.5-19.8 0zM88 424h48v36.3l-64.5 11.3-31.1-31.1L51.7 376H88v48z"/></svg>
<div class="t" style="top:552.73px;font-size:22px;color:#111;left:1189.04px;transform:scaleX(1.0850);transform-origin:0 0;">Edit</div>
<svg style="position:absolute;left:1160.8px;top:597px;width:22.6px;height:22.7px" viewBox="0 0 22.6 22.7"><path fill="#000" fill-rule="evenodd" d="M0 11.4 L11.6 0 L22.6 11.4 L11.6 22.7 Z M5.2 6 H10 V9.8 H5.2 Z M13.3 6 H17.8 V9.8 H13.3 Z M5.2 13.1 H10 V17 H5.2 Z M13.3 13.1 H17.8 V17 H13.3 Z"/></svg>
<div class="t" style="top:600.10px;font-size:22px;color:#111;left:1189.02px;transform:scaleX(1.0977);transform-origin:0 0;">Move</div>
<svg style="position:absolute;left:1160.9px;top:646.7px;width:19.59999999999991px;height:22.09999999999991px;color:#000;" viewBox="0 0 448 512" preserveAspectRatio="none" fill="#000"><path d="M433.941 65.941l-51.882-51.882A48 48 0 0 0 348.118 0H176c-26.51 0-48 21.49-48 48v48H48c-26.51 0-48 21.49-48 48v320c0 26.51 21.49 48 48 48h224c26.51 0 48-21.49 48-48v-48h80c26.51 0 48-21.49 48-48V99.882a48 48 0 0 0-14.059-33.941zM266 464H54a6 6 0 0 1-6-6V150a6 6 0 0 1 6-6h74v224c0 26.51 21.49 48 48 48h96v42a6 6 0 0 1-6 6zm128-96H182a6 6 0 0 1-6-6V54a6 6 0 0 1 6-6h106v88c0 13.255 10.745 24 24 24h88v202a6 6 0 0 1-6 6zm6-256h-64V48h9.632c1.591 0 3.117.632 4.243 1.757l48.368 48.368a6 6 0 0 1 1.757 4.243V112z"/></svg>
<div class="t" style="top:647.48px;font-size:22px;color:#111;left:1186.75px;transform:scaleX(1.0259);transform-origin:0 0;">Copy</div>
<svg style="position:absolute;left:1161px;top:693.3px;width:17px;height:22.600000000000023px;color:#000;" viewBox="0 0 384 512" preserveAspectRatio="none" fill="#000"><path d="M224 136V0H24C10.7 0 0 10.7 0 24v464c0 13.3 10.7 24 24 24h336c13.3 0 24-10.7 24-24V160H248c-13.2 0-24-10.8-24-24zm160-14.1v6.1H256V0h6.1c6.4 0 12.5 2.5 17 7l97.9 98c4.5 4.5 7 10.6 7 16.9z"/></svg>
<div class="t" style="top:694.85px;font-size:22px;color:#111;left:1183.49px;transform:scaleX(1.0588);transform-origin:0 0;">Rename</div>
<svg style="position:absolute;left:1161px;top:740.8px;width:22.700000000000045px;height:22.0px;color:#000;" viewBox="0 0 512 512" preserveAspectRatio="none" fill="#000"><path d="M512 176.001C512 273.203 433.202 352 336 352c-11.22 0-22.19-1.062-32.827-3.069l-24.012 27.014A23.999 23.999 0 0 1 261.223 384H224v40c0 13.255-10.745 24-24 24h-40v40c0 13.255-10.745 24-24 24H24c-13.255 0-24-10.745-24-24v-78.059c0-6.365 2.529-12.47 7.029-16.971l161.802-161.802C163.108 213.814 160 195.271 160 176 160 78.798 238.797.001 335.999 0 433.488-.001 512 78.511 512 176.001zM336 128c0 26.51 21.49 48 48 48s48-21.49 48-48-21.49-48-48-48-48 21.49-48 48z"/></svg>
<div class="t" style="top:742.23px;font-size:22px;color:#111;left:1189.11px;transform:scaleX(1.0653);transform-origin:0 0;">Change Permissions</div>
<svg style="position:absolute;left:1163.3px;top:790.7px;width:17.90000000000009px;height:16.0px;color:#000;" viewBox="0 89 352 334" preserveAspectRatio="none" fill="#000"><path d="M242.72 256l100.07-100.07c12.28-12.28 12.28-32.19 0-44.48l-22.24-22.24c-12.28-12.28-32.19-12.28-44.48 0L176 189.28 75.93 89.21c-12.28-12.28-32.19-12.28-44.48 0L9.21 111.45c-12.28 12.28-12.28 32.19 0 44.48L109.28 256 9.21 356.07c-12.28 12.28-12.28 32.19 0 44.48l22.24 22.24c12.28 12.28 32.2 12.28 44.48 0L176 322.72l100.070 100.070c12.28 12.28 32.2 12.28 44.48 0l22.24-22.24c12.28-12.28 12.28-32.19 0-44.48L242.72 256z"/></svg>
<div class="t" style="top:789.60px;font-size:22px;color:#111;left:1188.31px;transform:scaleX(1.1018);transform-origin:0 0;">Delete</div>
<svg style="position:absolute;left:1161.6px;top:835.6px;width:20.6px;height:20.2px" viewBox="0 0 20 20"><path d="M1.5 18.5 L7.5 12.5" stroke="#000" stroke-width="3.2"/><path d="M4.5 10.5 L9.6 10.5 L9.6 15.6 Z" fill="#000" stroke="#000" stroke-width="1.2" stroke-linejoin="round"/><path d="M18.5 1.5 L12.5 7.5" stroke="#000" stroke-width="3.2"/><path d="M10.5 4.5 L10.5 9.6 L15.6 9.6 Z" fill="#000" stroke="#000" stroke-width="1.2" stroke-linejoin="round"/></svg>
<div class="t" style="top:836.98px;font-size:22px;color:#111;left:1189.11px;transform:scaleX(1.0647);transform-origin:0 0;">Compress</div>
<svg style="position:absolute;left:0;top:0;width:1600px;height:1019px" viewBox="0 0 1600 1019">
<defs><mask id="m" maskUnits="userSpaceOnUse" x="0" y="0" width="1600" height="1019">
<rect x="0" y="0" width="1600" height="1019" fill="#fff"/>
<rect x="1124" y="427" width="336" height="473" fill="#000"/>
<rect x="544" y="584" width="1056" height="61.5" fill="#000"/>
<rect x="869" y="552" width="250" height="18.5" rx="6" fill="#000"/>
<path d="M1115.3 545 L1148.8 561.2 L1115.3 577.6 Z" fill="#000" stroke="#000" stroke-width="13" stroke-linejoin="round"/>
</mask></defs>
<rect x="0" y="0" width="1600" height="1019" fill="#000" fill-opacity="0.29" mask="url(#m)"/>
<path d="M875.5 562 H1118" stroke="#b683f9" stroke-width="6.5"/>
<path d="M1115.3 545 L1148.8 561.2 L1115.3 577.6 Z" fill="#b683f9"/>
</svg>
</div></body></html>
